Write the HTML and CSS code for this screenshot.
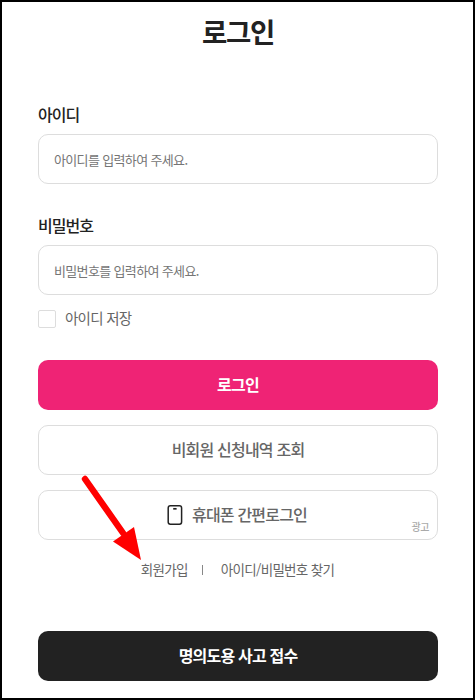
FILE: index.html
```html
<!DOCTYPE html>
<html lang="ko">
<head>
    <meta charset="UTF-8">
    <meta name="viewport" content="width=device-width, initial-scale=1.0">
    <title>로그인</title>
    <link rel="stylesheet" href="styles.css">
</head>
<body>
    <main class="container">
        <h1>로그인</h1>

        <form class="login-form">
            <label class="field-label" for="user-id">아이디</label>
            <input class="field-input" type="text" id="user-id" placeholder="아이디를 입력하여 주세요.">

            <label class="field-label" for="user-pw">비밀번호</label>
            <input class="field-input" type="password" id="user-pw" placeholder="비밀번호를 입력하여 주세요.">

            <label class="save-id">
                <input type="checkbox">
                <span>아이디 저장</span>
            </label>

            <div class="btn-group">
                <button type="button" class="btn btn-login"><span>로그인</span></button>
                <button type="button" class="btn"><span>비회원 신청내역 조회</span></button>
                <button type="button" class="btn btn-phone">
                    <svg class="phone-icon" width="16" height="20" viewBox="0 0 16 20">
                        <rect x="1.2" y="0.8" width="13.4" height="18.4" rx="2.2" fill="none" stroke="#222" stroke-width="1.5"/>
                        <path d="M6.2 3.8h3.4" stroke="#222" stroke-width="1.7"/>
                    </svg>
                    <span>휴대폰 간편로그인</span>
                    <em class="ad">광고</em>
                </button>
            </div>
        </form>

        <div class="links">
            <a href="#">회원가입</a>
            <i class="bar"></i>
            <a href="#">아이디/비밀번호 찾기</a>
        </div>

        <button type="button" class="btn btn-report"><span>명의도용 사고 접수</span></button>

        <svg class="arrow" width="64" height="90" viewBox="0 0 64 90">
            <path d="M8 8L46 62" stroke="#f00" stroke-width="6.4" stroke-linecap="round"/>
            <path d="M64 89L36 70.5L57 56Z" fill="#f00"/>
        </svg>
    </main>
</body>
</html>
```
FILE: styles.css
```css
* {
    box-sizing: border-box;
}
body {
    margin: 0;
    font-family: "Noto Sans CJK KR", sans-serif;
    color: #222;
    background-color: #fff;
}
.container {
    position: relative;
    height: 700px;
    padding: 8px 35px 0 36px;
    border: 2px solid #000;
}
h1 {
    margin: 0;
    font-size: 27.5px;
    font-weight: 700;
    line-height: 42px;
    letter-spacing: -0.05em;
    text-align: center;
}
.login-form {
    padding-top: 50px;
}
.field-label {
    display: block;
    height: 32px;
    font-size: 16px;
    font-weight: 500;
    line-height: 24px;
    letter-spacing: -0.06em;
}
.field-input {
    display: block;
    width: 100%;
    height: 50px;
    margin: 0 0 29px;
    padding: 0 15px;
    border: 1px solid #ddd;
    border-radius: 10px;
    font-family: inherit;
    font-size: 13px;
    letter-spacing: -0.05em;
    outline: none;
}
.field-input::placeholder {
    color: #757575;
}
#user-pw {
    margin-bottom: 15px;
}
.save-id {
    display: flex;
    align-items: center;
    gap: 9px;
    height: 18px;
    font-size: 14.5px;
    line-height: 18px;
    letter-spacing: -0.05em;
    color: #666;
}
.save-id span {
    padding-bottom: 2px;
}
.save-id input {
    appearance: none;
    width: 18px;
    height: 18px;
    margin: 0;
    border: 1px solid #ddd;
    border-radius: 2px;
}
.btn-group {
    display: flex;
    flex-direction: column;
    gap: 15px;
    margin-top: 32px;
}
.btn {
    position: relative;
    display: flex;
    align-items: center;
    justify-content: center;
    width: 100%;
    height: 50px;
    padding: 0;
    border: 1px solid #ddd;
    border-radius: 10px;
    background-color: #fff;
    color: #666;
    font-family: inherit;
    font-size: 16px;
    font-weight: 500;
    letter-spacing: -0.05em;
    cursor: pointer;
}
.btn span {
    padding-bottom: 2px;
}
.btn-login {
    border: none;
    background-color: #ef2375;
    color: #fff;
    font-weight: 700;
}
.btn-phone {
    padding-right: 2px;
}
.phone-icon {
    margin-right: 9px;
}
.ad {
    position: absolute;
    right: 8px;
    bottom: 5px;
    font-size: 10px;
    font-style: normal;
    line-height: 15px;
    letter-spacing: -0.5px;
    color: #aaa;
}
.links {
    display: flex;
    align-items: center;
    justify-content: center;
    height: 20px;
    margin-top: 20px;
    padding-right: 1px;
}
.links a {
    padding-bottom: 2px;
    font-size: 13.5px;
    line-height: 20px;
    letter-spacing: -0.05em;
    color: #666;
    text-decoration: none;
}
.bar {
    width: 1px;
    height: 10px;
    margin: 0 18px 0 14px;
    background-color: #888;
}
.btn-report {
    margin-top: 51px;
    border: none;
    background-color: #222;
    color: #fff;
    font-weight: 700;
}
.arrow {
    position: absolute;
    left: 75px;
    top: 469px;
}
```
